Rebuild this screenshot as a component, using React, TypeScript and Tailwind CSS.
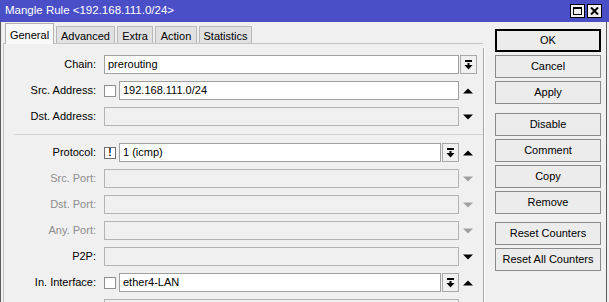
import React from "react";

const DropIcon = ({ disabled }: { disabled?: boolean }) => (
  <svg width="9" height="10" viewBox="0 0 9 10" fill={disabled ? "#a0a0a0" : "#000"}>
    <rect x="1" y="0" width="7" height="2" />
    <rect x="3.5" y="3" width="2" height="2" />
    <polygon points="0.5,5 8.5,5 4.5,9.5" />
  </svg>
);

const Up = ({ disabled }: { disabled?: boolean }) => (
  <svg width="10" height="6" viewBox="0 0 10 6">
    <polygon points="0,5.5 10,5.5 5,0.5" fill={disabled ? "#a0a0a0" : "#000"} />
  </svg>
);

const Down = ({ disabled }: { disabled?: boolean }) => (
  <svg width="10" height="6" viewBox="0 0 10 6">
    <polygon points="0,0.5 10,0.5 5,5.5" fill={disabled ? "#a0a0a0" : "#000"} />
  </svg>
);

const DropBtn = () => (
  <div className="w-[17px] h-[19px] border border-[#a8a8a8] bg-[#f0f0f0] flex items-center justify-center shrink-0">
    <DropIcon />
  </div>
);

const Check = () => <div className="w-[12px] h-[12px] border border-[#8f8f8f] bg-white shrink-0" />;

const Field = ({ text, disabled }: { text?: string; disabled?: boolean }) => (
  <div
    className={
      "flex-1 h-[19px] border flex items-center px-[3px] " +
      (disabled ? "border-[#b4b4b4] bg-[#f0f0f0]" : "border-[#a0a0a0] bg-white")
    }
  >
    {text}
  </div>
);

const Row = ({
  label,
  disabled,
  children,
  right,
}: {
  label: string;
  disabled?: boolean;
  children: React.ReactNode;
  right?: React.ReactNode;
}) => (
  <div className="flex items-center h-[19px]">
    <div className={"w-[93px] text-right pr-[1px] " + (disabled ? "text-[#8d8d8d]" : "text-black")}>{label}</div>
    <div className="w-[7px]" />
    <div className="w-[355px] flex items-center gap-[3px] h-[19px]">{children}</div>
    <div className="w-[18px] flex items-center justify-center">{right}</div>
  </div>
);

const Btn = ({ label, focused, className }: { label: string; focused?: boolean; className?: string }) => (
  <div
    className={
      "w-[106px] h-[23px] flex items-center justify-center bg-[#ececec] " +
      (focused ? "border-2 border-black " : "border border-[#8a8a8a] ") +
      (className ?? "")
    }
  >
    {label}
  </div>
);

export default function App() {
  return (
    <div
      className="w-[609px] h-[302px] overflow-hidden bg-[#f0f0f0] text-[11px] text-black leading-none"
      style={{ fontFamily: '"Liberation Sans", Arial, sans-serif' }}
    >
      <div className="h-[22px] bg-[#4a4fc8] flex items-center justify-between pl-[5px] pr-[7px] text-white text-[11.5px]">
        <span>Mangle Rule &lt;192.168.111.0/24&gt;</span>
        <div className="flex gap-[2px]">
          <div className="w-[15px] h-[14px] bg-[#f0f0f0] border border-black flex items-center justify-center">
            <div className="w-[9px] h-[8px] border border-black border-t-2" />
          </div>
          <div className="w-[15px] h-[14px] bg-[#f0f0f0] border border-black flex items-center justify-center">
            <svg width="9" height="8" viewBox="0 0 9 8">
              <path d="M1 0.5 L8 7.5 M8 0.5 L1 7.5" stroke="#000" strokeWidth="2" />
            </svg>
          </div>
        </div>
      </div>
      <div className="flex h-[280px] w-[607px] border-l border-r border-[#5c5c5c]">
        <div className="w-[482px] flex flex-col">
          <div className="flex items-end h-[24px] pl-[4px] gap-[2px]">
            <div className="h-[21px] px-[6px] pt-[2px] bg-[#f9f9f9] border border-b-0 border-[#b0b0b0] flex items-center relative top-[1px] w-[49px] justify-center">
              General
            </div>
            {["Advanced", "Extra", "Action", "Statistics"].map((t, i) => (
              <div
                key={t}
                className={
                  "h-[17px] pt-[2px] bg-[#e1e1e1] border border-b-0 border-[#b8b8b8] flex items-center justify-center " +
                  ["w-[59px]", "w-[36px]", "w-[42px]", "w-[53px]"][i]
                }
              >
                {t}
              </div>
            ))}
          </div>
          <div className="flex-1 border-t border-l border-[#c4c4c4] ml-[2px] pt-[11px] flex flex-col gap-[7px]">
            <Row label="Chain:" right={<DropBtn />}>
              <Field text="prerouting" />
            </Row>
            <Row label="Src. Address:" right={<Up />}>
              <Check />
              <Field text="192.168.111.0/24" />
            </Row>
            <Row label="Dst. Address:" right={<Down />}>
              <Field disabled />
            </Row>
            <div className="h-[1px] bg-[#d4d4d4] ml-[10px] my-[1px]" />
            <Row label="Protocol:" right={<Up />}>
              <div className="w-[12px] h-[12px] border border-[#6e6e6e] bg-white shrink-0 flex items-center justify-center font-bold text-[10px]">
                !
              </div>
              <Field text="1 (icmp)" />
              <div className="-ml-[2px]">
                <DropBtn />
              </div>
            </Row>
            <Row label="Src. Port:" disabled right={<Down disabled />}>
              <Field disabled />
            </Row>
            <Row label="Dst. Port:" disabled right={<Down disabled />}>
              <Field disabled />
            </Row>
            <Row label="Any. Port:" disabled right={<Down disabled />}>
              <Field disabled />
            </Row>
            <Row label="P2P:" right={<Down />}>
              <Field disabled />
            </Row>
            <Row label="In. Interface:" right={<Up />}>
              <Check />
              <Field text="ether4-LAN" />
              <div className="-ml-[2px]">
                <DropBtn />
              </div>
            </Row>
            <Row label="" right={null}>
              <Field disabled />
            </Row>
          </div>
        </div>
        <div className="w-[1px] bg-[#a8a8a8] mt-[26px]" />
        <div className="w-[1px] bg-white mt-[26px]" />
        <div className="flex flex-col pl-[10px] pt-[7px] gap-[3px]">
          <Btn label="OK" focused />
          <Btn label="Cancel" />
          <Btn label="Apply" />
          <Btn label="Disable" className="mt-[6px]" />
          <Btn label="Comment" />
          <Btn label="Copy" />
          <Btn label="Remove" />
          <Btn label="Reset Counters" className="mt-[5px]" />
          <Btn label="Reset All Counters" />
        </div>
      </div>
    </div>
  );
}
